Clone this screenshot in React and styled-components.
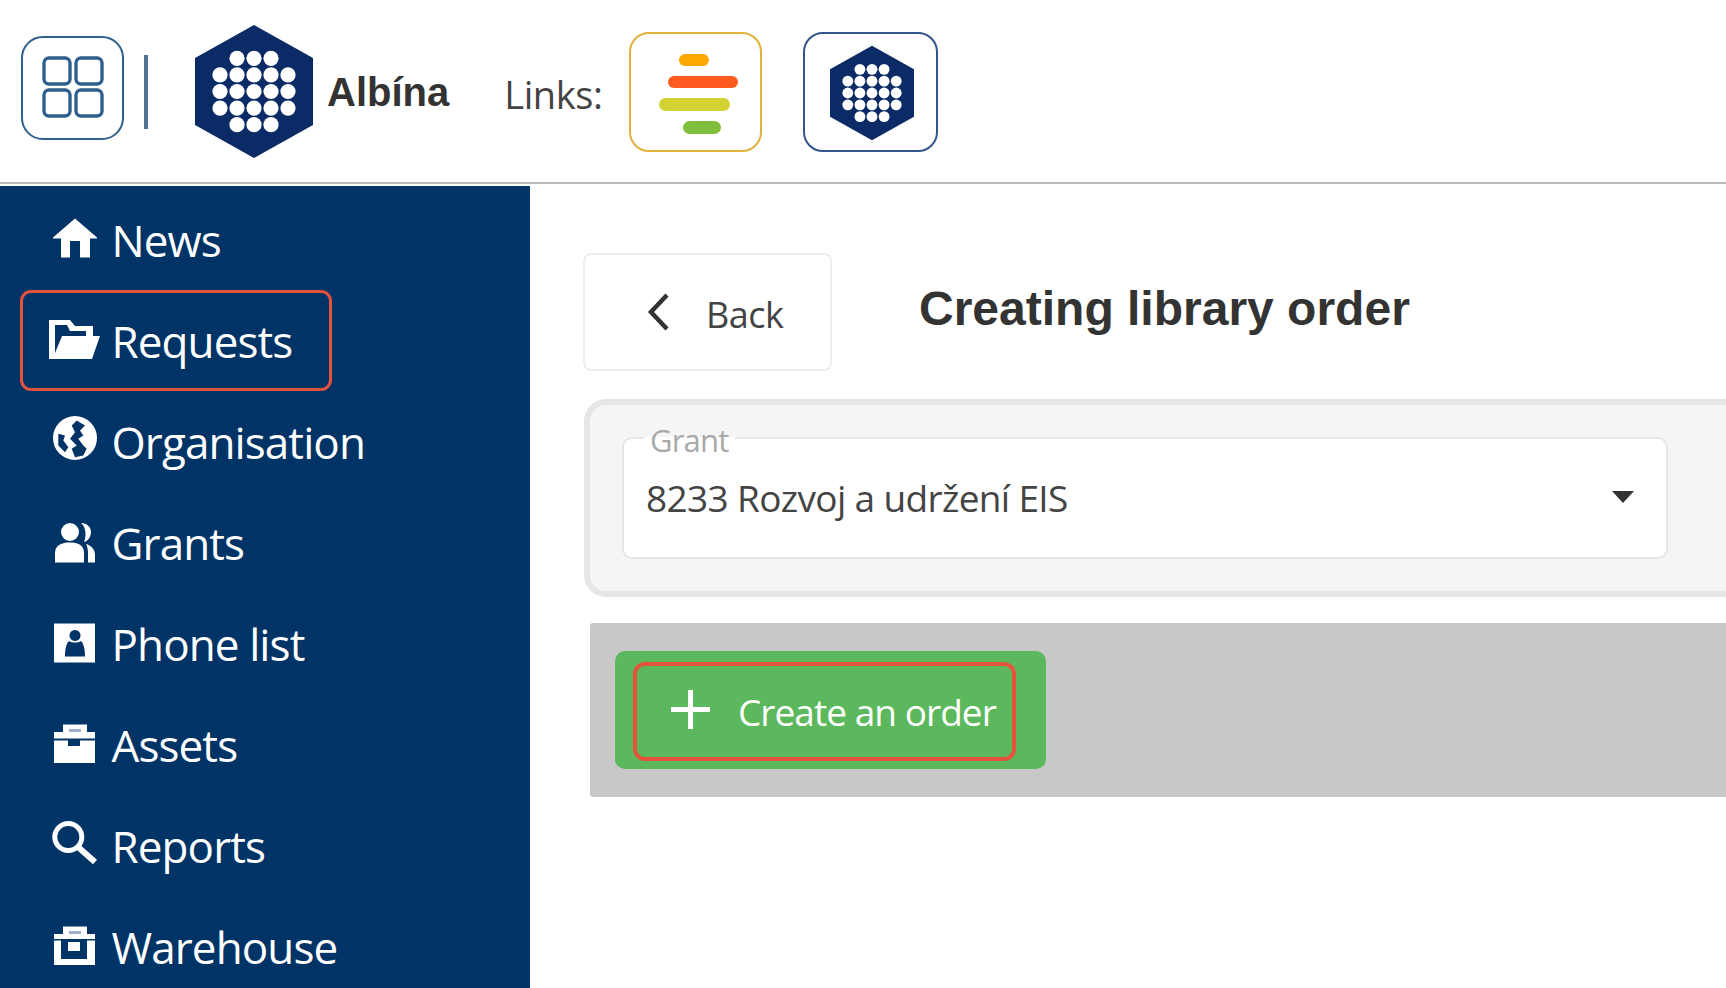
import React from "react";
import styled, { createGlobalStyle } from "styled-components";

const Global = createGlobalStyle`
  html, body { margin: 0; padding: 0; height: 100%; background: #fff; overflow: hidden; }
  body { font-family: "Open Sans", "Noto Sans", sans-serif; }
`;
const Page = styled.div`width: 1726px; height: 988px; overflow: hidden; display: flex; flex-direction: column;`;
const Header = styled.header`
  height: 182px; flex: none; display: flex; align-items: center; background: #fff;
  border-bottom: 2px solid #b9b9b9; margin-bottom: 2px; padding-left: 21px; box-sizing: content-box;
`;
const AppsButton = styled.div`
  width: 103px; height: 104px; box-sizing: border-box; border: 2px solid #2f5f8f; border-radius: 22px;
  display: flex; align-items: center; justify-content: center; margin-top: -6px; padding: 0 0 3px 1px;
`;
const Divider = styled.div`width: 4px; height: 74px; margin: 2px 0 0 20px; background: #4f7390;`;
const BrandLogo = styled.div`display: flex; margin-left: 47px;`;
const BrandName = styled.div`
  margin: 2px 0 0 14px; font-family: "Liberation Sans", sans-serif; font-weight: 700; font-size: 40px; color: #333;
`;
const LinksLabel = styled.div`margin: 6px 0 0 55px; font-size: 38px; letter-spacing: -0.4px; color: #444;`;
const LinkButton = styled.div`
  width: ${p => p.$w}px; height: 120px; box-sizing: border-box; border: 2px solid ${p => p.$color}; border-radius: 20px;
  margin-left: ${p => p.$ml}px; display: flex; align-items: center; justify-content: center; margin-top: 2px;
  padding: ${p => p.$pt}px 0 0 ${p => p.$pl}px;
`;
const Body = styled.div`flex: 1; display: flex; min-height: 0;`;
const Sidebar = styled.nav`width: 530px; flex: none; background: #003366; display: flex; flex-direction: column; padding-top: 3px; box-sizing: border-box;`;
const NavItem = styled.div`
  height: 101px; box-sizing: border-box; margin-left: 20px; width: 312px; flex: none;
  display: flex; align-items: center; border-radius: 11px; padding-left: 27px;
  border: 3px solid ${p => (p.$active ? "#e5533d" : "transparent")};
  color: #fff; font-size: 44px; letter-spacing: -0.9px; white-space: nowrap;
`;
const NavIcon = styled.span`width: 50px; height: 50px; flex: none; display: flex; margin: 2px 11.5px 0 0;`;
const Main = styled.main`flex: 1; min-width: 0; padding: 67px 0 0 54px; display: flex; flex-direction: column;`;
const TopRow = styled.div`display: flex; align-items: center; height: 117px; margin-left: -1px;`;
const BackButton = styled.div`
  width: 249px; height: 118px; box-sizing: border-box; border: 2px solid #eee; border-radius: 8px; align-self: flex-start; flex: none;
  display: flex; align-items: center; padding-left: 62px; gap: 35px; font-size: 36px; letter-spacing: -0.5px; color: #444;
`;
const BackLabel = styled.span`position: relative; top: 2px;`;
const Title = styled.h1`
  margin: 0 0 6px 87px; font-family: "Liberation Sans", sans-serif; font-weight: 700; font-size: 48px; color: #333; white-space: nowrap;
`;
const Panel = styled.div`
  margin-top: 29px; height: 198px; box-sizing: border-box; background: #f5f5f5; border: 6px solid #e6e6e6; border-right: 0;
  border-radius: 22px 0 0 22px; padding: 18px 58px 0 32px;
`;
const Field = styled.fieldset`
  margin: 0; height: 136px; box-sizing: border-box; border: 2px solid #e6e6e6; border-radius: 10px; background: #fff;
  padding: 0 32px 0 22px; display: flex; align-items: center; justify-content: space-between;
`;
const Legend = styled.legend`
  margin-left: -2px; padding: 0 6px; font-size: 31px; line-height: 30px; letter-spacing: -0.8px; color: #a8a8a8;
  & > span { position: relative; top: 2px; }
`;
const FieldRow = styled.div`width: 100%; display: flex; align-items: center; justify-content: space-between; margin-top: -16px;`;
const FieldValue = styled.div`font-size: 37px; letter-spacing: -0.65px; color: #444;`;
const Band = styled.div`margin: 26px 0 0 6px; height: 174px; box-sizing: border-box; background: #c8c8c8; border-radius: 3px 0 0 3px; padding: 28px 25px;`;
const CreateButton = styled.div`
  width: 431px; height: 118px; box-sizing: border-box; background: #5cb85c; border-radius: 10px; padding: 11px 0 0 18px;
`;
const CreateInner = styled.div`
  width: 383px; height: 99px; box-sizing: border-box; border: 4px solid #e5533d; border-radius: 12px; padding-left: 33px;
  display: flex; align-items: center; gap: 27px; color: #fff; font-size: 37px; letter-spacing: -0.95px; white-space: nowrap;
`;
const PlusIcon = styled.svg`margin-bottom: 5px;`;

const DOT_ROWS = [[-1, 0, 1], [-2, -1, 0, 1, 2], [-2, -1, 0, 1, 2], [-2, -1, 0, 1, 2], [-1, 0, 1]];
const Hex = ({ w, h }) => (
  <svg width={w} height={h} viewBox="0 0 118 133">
    <polygon points="59,0 118,33 118,100 59,133 0,100 0,33" fill="#0b2b66" />
    {DOT_ROWS.map((row, r) => row.map(c => (
      <circle key={`${r}${c}`} cx={59 + c * 17} cy={66.5 + (r - 2) * 16.6} r="7.6" fill="#fff" />
    )))}
  </svg>
);

const ico = { width: 50, height: 50, viewBox: "0 0 50 50", fill: "#fff", style: { overflow: "visible" } };
const ICONS = {
  home: <svg {...ico}><path d="M25 2.5 L47 21.5 V22.5 H40 V41.5 H30 V25 H20 V41.5 H11 V22.5 H3 V21.5 Z" /></svg>,
  folder: (
    <svg {...ico}>
      <path fillRule="evenodd" d="M-1 3 H20 L25 9 H43 V19 H50 L42 42 H-1 Z M5 8 V36 L12 19 H36 V14 H20 L17 8 Z" />
    </svg>
  ),
  globe: (
    <svg {...ico}>
      <circle cx="25" cy="20" r="22" />
      <path fill="#003366" d="M26.7 2.5 L35 7.5 L30 12.5 L33.3 17.5 L28.3 20.8 L33.3 27.5 L36.7 30.8 L33.3 37.5 L25 39.2 L21.7 30.8 L26.7 27.5 L20 20.8 L25 14.2 L21.7 7.5 Z" />
      <path fill="#003366" d="M8.3 15.8 L15 17.5 L13.3 22.5 L18.3 29.2 L15 34.2 L8.3 27.5 Z" />
    </svg>
  ),
  users: (
    <svg {...ico}>
      <circle cx="20" cy="13" r="9" />
      <path d="M5 43.5 V34 C5 26 12 23.5 20 23.5 C28 23.5 34 26 34 34 V43.5 Z" />
      <path d="M31 4 C37 4 41 8 41 13 C41 18 38 22 34 23 C36 19 37 9 31 4 Z" />
      <path d="M36 25 C42 27 45 31 45 36 V43.5 H38 V34 C38 30 37 27 36 25 Z" />
    </svg>
  ),
  contact: (
    <svg {...ico}>
      <path fillRule="evenodd" d="M4 3.5 H45 V42.5 H4 Z M25 10 A5.5 5.5 0 1 0 25.01 10 Z M19 21 C16 24 15 30 15 36.5 H35 C35 30 34 24 31 21 C28 23 22 23 19 21 Z" />
    </svg>
  ),
  case: (
    <svg {...ico}>
      <path fillRule="evenodd" d="M13 3.5 H37 V11 H45 V17.5 H4 V11 H13 Z M19 8 V11 H31 V8 Z" />
      <rect x="19" y="8" width="12" height="3" fill="#9fb0c8" />
      <path d="M4 19.5 H18 V25 H30 V19.5 H45 V42 H4 Z" />
    </svg>
  ),
  search: (
    <svg {...ico} fill="none" stroke="#fff">
      <circle cx="18.3" cy="15" r="13.5" strokeWidth="5" />
      <path d="M28 25 L45 40" strokeWidth="6" />
    </svg>
  ),
  box: (
    <svg {...ico}>
      <path fillRule="evenodd" d="M13 3.5 H37 V11 H45 V16 H4 V11 H13 Z M19 8 V11 H31 V8 Z" />
      <rect x="19" y="8" width="12" height="3" fill="#9fb0c8" />
      <path d="M4 17.5 H11 V36 H37 V17.5 H45 V42 H4 Z" />
      <rect x="18" y="19" width="12" height="9" />
    </svg>
  ),
};

const NAV = [
  ["home", "News"], ["folder", "Requests", true], ["globe", "Organisation"], ["users", "Grants"],
  ["contact", "Phone list"], ["case", "Assets"], ["search", "Reports"], ["box", "Warehouse"],
];

export default function App() {
  return (
    <Page>
      <Global />
      <Header>
        <AppsButton>
          <svg width="62" height="62" viewBox="0 0 62 62" fill="none" stroke="#2f5f8f" strokeWidth="3.4">
            <rect x="2" y="2" width="26" height="26" rx="5" />
            <rect x="34" y="2" width="26" height="26" rx="5" />
            <rect x="2" y="34" width="26" height="26" rx="5" />
            <rect x="34" y="34" width="26" height="26" rx="5" />
          </svg>
        </AppsButton>
        <Divider />
        <BrandLogo><Hex w={118} h={133} /></BrandLogo>
        <BrandName>Albína</BrandName>
        <LinksLabel>Links:</LinksLabel>
        <LinkButton $color="#e0b23a" $w={133} $ml={26} $pt={4} $pl={7}>
          <svg width="80" height="80" viewBox="0 0 80 80">
            <rect x="20" y="0" width="30" height="12" rx="6" fill="#ffa800" />
            <rect x="9" y="22" width="70" height="12" rx="6" fill="#ff5a1f" />
            <rect x="0" y="44" width="71" height="13" rx="6.5" fill="#d4d232" />
            <rect x="24" y="67" width="38" height="13" rx="6.5" fill="#80bf3c" />
          </svg>
        </LinkButton>
        <LinkButton $color="#34558c" $w={135} $ml={41} $pt={2} $pl={3}><Hex w={84} h={96} /></LinkButton>
      </Header>
      <Body>
        <Sidebar>
          {NAV.map(([icon, label, active]) => (
            <NavItem key={label} $active={active}>
              <NavIcon>{ICONS[icon]}</NavIcon>
              {label}
            </NavItem>
          ))}
        </Sidebar>
        <Main>
          <TopRow>
            <BackButton>
              <svg width="24" height="40" viewBox="0 0 24 40" fill="none" stroke="#333" strokeWidth="4.5">
                <path d="M20 3 L4 20 L20 37" />
              </svg>
              <BackLabel>Back</BackLabel>
            </BackButton>
            <Title>Creating library order</Title>
          </TopRow>
          <Panel>
            <Field>
              <Legend><span>Grant</span></Legend>
              <FieldRow>
                <FieldValue>8233 Rozvoj a udržení EIS</FieldValue>
                <svg width="22" height="12" viewBox="0 0 22 12"><path d="M0 0 H22 L11 12 Z" fill="#333" /></svg>
              </FieldRow>
            </Field>
          </Panel>
          <Band>
            <CreateButton>
              <CreateInner>
                <PlusIcon width="41" height="41" viewBox="0 0 41 41" stroke="#fff" strokeWidth="5"><path d="M20.5 1 V40 M1 20.5 H40" /></PlusIcon>
                Create an order
              </CreateInner>
            </CreateButton>
          </Band>
        </Main>
      </Body>
    </Page>
  );
}
